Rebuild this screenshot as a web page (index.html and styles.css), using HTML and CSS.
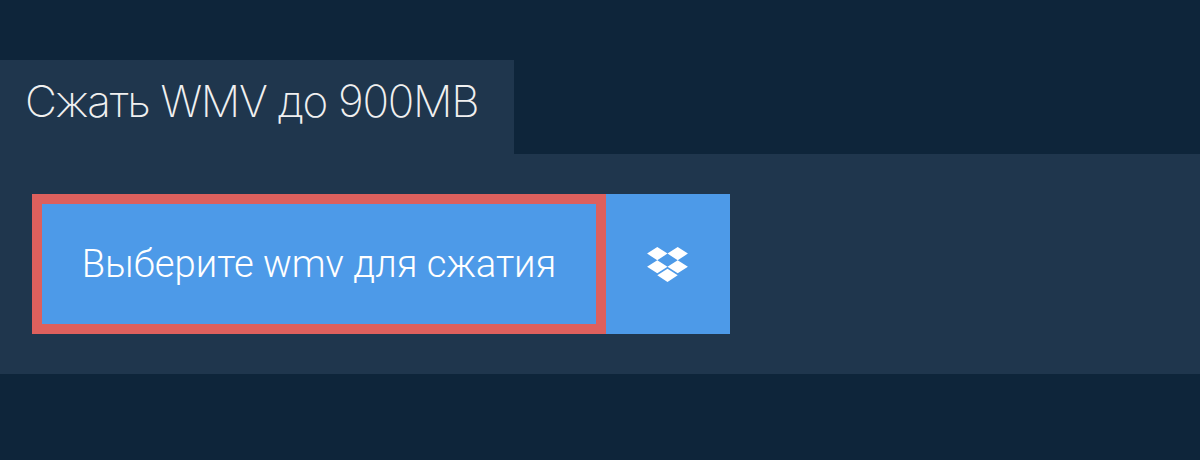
FILE: index.html
```html
<!DOCTYPE html>
<html lang="ru">
<head>
    <meta charset="UTF-8">
    <title>Сжать WMV до 900MB</title>
    <link rel="stylesheet" href="styles.css">
</head>
<body>
    <div class="tab">
        <h1 class="tab-title">Сжать WMV до 900MB</h1>
    </div>
    <div class="panel">
        <button class="btn choose">Выберите wmv для сжатия</button>
        <button class="btn dropbox" aria-label="Dropbox">
            <svg class="dropbox-icon" viewBox="0 0 42 36" width="41" height="35">
                <path fill="#fff" d="M10.5 0 0 6.8l10.5 6.7L21 6.8zM31.5 0 21 6.8l10.5 6.7L42 6.8zM0 20.2l10.5 6.7L21 20.2l-10.5-6.7zM31.5 13.5 21 20.2l10.5 6.7L42 20.2zM21 22.3l-10.5 6.8L21 36l10.5-6.9z"/>
            </svg>
        </button>
    </div>
</body>
</html>
```

FILE: styles.css
```css
body {
    margin: 0;
    padding-top: 60px;
    background-color: #0e253a;
}
.tab {
    width: 514px;
    height: 94px;
    box-sizing: border-box;
    padding-left: 25px;
    background-color: #1f364d;
}
.tab-title {
    margin: 0;
    font-family: Inter, "Noto Sans", sans-serif;
    font-size: 44px;
    font-weight: 200;
    line-height: 82px;
    letter-spacing: -1.3px;
    white-space: nowrap;
    color: #f0f0f0;
}
.panel {
    display: flex;
    height: 220px;
    box-sizing: border-box;
    padding: 40px 32px;
    background-color: #1f364d;
}
.btn {
    height: 140px;
    border: none;
    padding: 0;
    color: #fff;
    background-color: #4d9ae8;
}
.choose {
    width: 574px;
    box-sizing: border-box;
    border: 10px solid #dd605d;
    font-family: Roboto, "Liberation Sans", sans-serif;
    font-size: 38.2px;
    font-weight: 300;
}
.dropbox {
    display: flex;
    align-items: center;
    justify-content: center;
    width: 124px;
    padding-right: 2px;
    box-sizing: border-box;
}
```
